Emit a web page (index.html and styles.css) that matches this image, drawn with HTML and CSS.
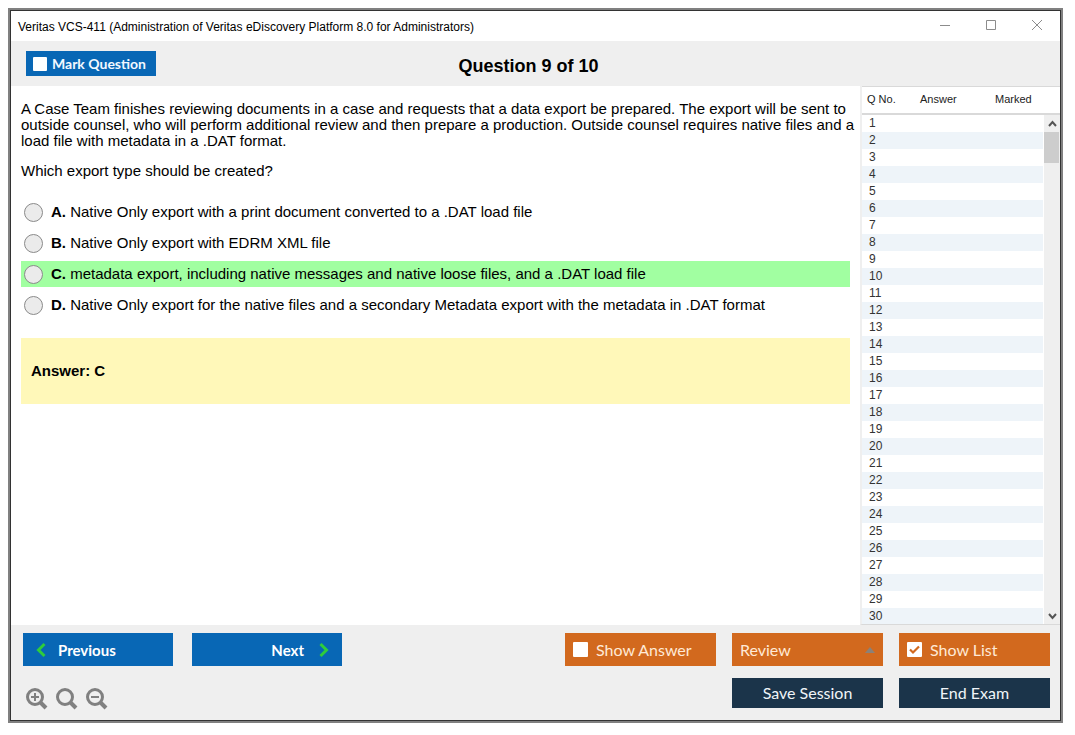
FILE: index.html
```
<!DOCTYPE html>
<html lang="en">
<head>
    <meta charset="UTF-8">
    <title>Veritas VCS-411</title>
    <link rel="stylesheet" href="styles.css">
</head>
<body>
<div class="window">
    <header class="caption">
        <span class="caption-title">Veritas VCS-411 (Administration of Veritas eDiscovery Platform 8.0 for Administrators)</span>
        <div class="caption-buttons">
            <button type="button" aria-label="Minimize"><svg width="12" height="12" viewBox="0 0 12 12"><path d="M1 5.500h10"/></svg></button>
            <button type="button" aria-label="Maximize"><svg width="12" height="12" viewBox="0 0 12 12"><path d="M1.500 0.500h9v9h-9z"/></svg></button>
            <button type="button" aria-label="Close"><svg width="12" height="12" viewBox="0 0 12 12"><path d="M1 0l10 10M11 0L1 10"/></svg></button>
        </div>
    </header>

    <div class="topbar">
        <label class="mark"><input type="checkbox" class="check">Mark Question</label>
        <h1>Question 9 of 10</h1>
    </div>

    <div class="main">
        <main class="question">
            <p>A Case Team finishes reviewing documents in a case and requests that a data export be prepared. The export will be sent to outside counsel, who will perform additional review and then prepare a production. Outside counsel requires native files and a load file with metadata in a .DAT format.</p>
            <p>Which export type should be created?</p>
            <div class="options">
                <label class="option"><input type="radio" name="answer"><span><b>A.</b> Native Only export with a print document converted to a .DAT load file</span></label>
                <label class="option"><input type="radio" name="answer"><span><b>B.</b> Native Only export with EDRM XML file</span></label>
                <label class="option correct"><input type="radio" name="answer"><span><b>C.</b> metadata export, including native messages and native loose files, and a .DAT load file</span></label>
                <label class="option"><input type="radio" name="answer"><span><b>D.</b> Native Only export for the native files and a secondary Metadata export with the metadata in .DAT format</span></label>
            </div>
            <div class="answer">Answer: C</div>
        </main>

        <aside class="list">
            <div class="list-head"><span>Q No.</span><span>Answer</span><span>Marked</span></div>
            <div class="list-body">
                <table aria-label="Questions">
                    <tbody>
                    <tr><td>1</td><td></td><td></td></tr>
                    <tr><td>2</td><td></td><td></td></tr>
                    <tr><td>3</td><td></td><td></td></tr>
                    <tr><td>4</td><td></td><td></td></tr>
                    <tr><td>5</td><td></td><td></td></tr>
                    <tr><td>6</td><td></td><td></td></tr>
                    <tr><td>7</td><td></td><td></td></tr>
                    <tr><td>8</td><td></td><td></td></tr>
                    <tr><td>9</td><td></td><td></td></tr>
                    <tr><td>10</td><td></td><td></td></tr>
                    <tr><td>11</td><td></td><td></td></tr>
                    <tr><td>12</td><td></td><td></td></tr>
                    <tr><td>13</td><td></td><td></td></tr>
                    <tr><td>14</td><td></td><td></td></tr>
                    <tr><td>15</td><td></td><td></td></tr>
                    <tr><td>16</td><td></td><td></td></tr>
                    <tr><td>17</td><td></td><td></td></tr>
                    <tr><td>18</td><td></td><td></td></tr>
                    <tr><td>19</td><td></td><td></td></tr>
                    <tr><td>20</td><td></td><td></td></tr>
                    <tr><td>21</td><td></td><td></td></tr>
                    <tr><td>22</td><td></td><td></td></tr>
                    <tr><td>23</td><td></td><td></td></tr>
                    <tr><td>24</td><td></td><td></td></tr>
                    <tr><td>25</td><td></td><td></td></tr>
                    <tr><td>26</td><td></td><td></td></tr>
                    <tr><td>27</td><td></td><td></td></tr>
                    <tr><td>28</td><td></td><td></td></tr>
                    <tr><td>29</td><td></td><td></td></tr>
                    <tr><td>30</td><td></td><td></td></tr>
                    </tbody>
                </table>
                <div class="scrollbar">
                    <button type="button" aria-label="Scroll up"><svg width="9" height="8" viewBox="0 0 9 8"><path d="M1 6l3.500-4L8 6"/></svg></button>
                    <div class="thumb"></div>
                    <button type="button" aria-label="Scroll down" class="down"><svg width="9" height="8" viewBox="0 0 9 8"><path d="M1 2l3.500 4L8 2"/></svg></button>
                </div>
            </div>
        </aside>
    </div>

    <footer class="footer">
        <div class="side">
            <div class="row nav">
                <button type="button" class="btn blue"><svg width="10" height="16" viewBox="0 0 10 16"><path d="M8.500 2L2.500 8l6 6"/></svg>Previous</button>
                <button type="button" class="btn blue next">Next<svg width="10" height="16" viewBox="0 0 10 16"><path d="M1.500 2l6 6-6 6"/></svg></button>
            </div>
            <div class="zoom">
                <button type="button" aria-label="Zoom in"><svg width="22" height="22" viewBox="0 0 22 22"><circle cx="9" cy="9" r="7.500"/><path class="handle" d="M14.500 14.500l5.500 5.500"/><path class="sign" d="M5 9h8M9 5v8"/></svg></button>
                <button type="button" aria-label="Reset zoom"><svg width="22" height="22" viewBox="0 0 22 22"><circle cx="9" cy="9" r="7.500"/><path class="handle" d="M14.500 14.500l5.500 5.500"/></svg></button>
                <button type="button" aria-label="Zoom out"><svg width="22" height="22" viewBox="0 0 22 22"><circle cx="9" cy="9" r="7.500"/><path class="handle" d="M14.500 14.500l5.500 5.500"/><path class="sign" d="M5 9h8"/></svg></button>
            </div>
        </div>
        <div class="side right">
            <div class="row">
                <label class="btn orange"><input type="checkbox" class="check">Show Answer</label>
                <button type="button" class="btn orange review" aria-haspopup="menu">Review<svg width="10" height="6" viewBox="0 0 10 6"><path d="M0 6l5-6 5 6z"/></svg></button>
                <label class="btn orange"><input type="checkbox" class="check" checked>Show List</label>
            </div>
            <div class="row">
                <button type="button" class="btn navy">Save Session</button>
                <button type="button" class="btn navy">End Exam</button>
            </div>
        </div>
    </footer>
</div>
</body>
</html>
```
FILE: styles.css
```
* {
    box-sizing: border-box;
}

body {
    display: flex;
    min-height: 100vh;
    margin: 0;
    padding: 8px 12px 12px 8px;
    background: #fff;
    color: #000;
    font-family: "Liberation Sans", Arial, sans-serif;
    font-size: 15px;
    line-height: 16px;
}

button {
    margin: 0;
    padding: 0;
    border: 0;
    background: none;
    color: inherit;
    font: inherit;
    cursor: pointer;
}

svg {
    display: block;
    flex: none;
    fill: none;
}

.window {
    display: flex;
    flex-direction: column;
    flex: 1;
    min-width: 0;
    padding: 1px;
    border: 2px solid #808080;
    background: #333;
}

/* title bar */
.caption {
    display: flex;
    justify-content: space-between;
    height: 30px;
    padding-left: 7px;
    background: #fff;
    font-size: 12px;
    line-height: 32px;
}

.caption-buttons {
    display: flex;
}

.caption-buttons button {
    display: flex;
    align-items: center;
    justify-content: center;
    width: 46px;
}

.caption-buttons svg {
    stroke: #8c8c8c;
}

.topbar {
    display: grid;
    grid-template-columns: 1fr auto 1fr;
    align-items: center;
    height: 45px;
    padding: 0 29px 0 15px;
    background: #efefef;
}

.topbar h1 {
    margin: 0;
    padding-top: 4px;
    font-size: 18px;
    line-height: 20px;
}

.mark {
    display: flex;
    align-items: center;
    justify-self: start;
    gap: 5px;
    width: 130px;
    height: 25px;
    padding-left: 7px;
    background: #0867b5;
    color: #f2f8ff;
    font-family: Lato, sans-serif;
    font-size: 14px;
    font-weight: bold;
}

.check {
    appearance: none;
    display: block;
    flex: none;
    width: 14px;
    height: 14px;
    margin: 0;
    border-radius: 1px;
    background: #fff;
}

.main {
    display: flex;
    flex: 1;
    background: #fff;
}

.question {
    flex: 1;
    min-width: 0;
    padding: 15px 10px;
}

.question p {
    margin: 0 -8px 14px 0;
}

.options {
    display: flex;
    flex-direction: column;
    gap: 5px;
    margin: 20px 0;
}

.option {
    display: flex;
    align-items: center;
    gap: 8px;
    min-height: 26px;
    padding-left: 3px;
}

.option input {
    appearance: none;
    flex: none;
    width: 19px;
    height: 19px;
    margin: 0;
    border: 1px solid #8a8a8a;
    border-radius: 50%;
    background: #ebebeb;
}

.option input:checked {
    border: 5px solid #0867b5;
}

.correct {
    background: #a1ffa1;
}

.answer {
    padding: 25px 10px;
    background: #fff8b9;
    font-weight: bold;
}

/* question list */
.list {
    display: flex;
    flex-direction: column;
    width: 200px;
    border-left: 2px solid #efefef;
    border-bottom: 1px solid #d9d9d9;
    color: #333;
}

.list-head {
    display: grid;
    grid-template-columns: 53px 75px 1fr;
    height: 29px;
    padding-left: 5px;
    border-top: 1px solid #d9d9d9;
    border-bottom: 2px solid #d9d9d9;
    color: #222;
    font-size: 11px;
    line-height: 25px;
}

.list-body {
    display: flex;
    flex: 1 1 0;
    gap: 1px;
    height: 0;
    min-height: 200px;
    overflow: hidden;
}

.list table {
    flex: 1;
    align-self: flex-start;
    border-collapse: collapse;
    font-size: 12px;
    line-height: 17px;
}

.list td {
    height: 17px;
    padding: 0 0 0 7px;
}

.list tr:nth-child(even) {
    background: #eef4f9;
}

.scrollbar {
    display: flex;
    flex-direction: column;
    width: 16px;
    background: #efefef;
}

.scrollbar button {
    display: flex;
    align-items: center;
    justify-content: center;
    height: 17px;
}

.scrollbar svg {
    stroke: #555;
    stroke-width: 2;
}

.scrollbar .down {
    margin-top: auto;
}

.thumb {
    height: 31px;
    margin-right: 1px;
    background: #cdcdcd;
}

/* bottom buttons */
.footer {
    display: flex;
    justify-content: space-between;
    padding: 8px 10px 10px 12px;
    background: #efefef;
    font-family: Lato, sans-serif;
    font-size: 16px;
}

.side {
    display: flex;
    flex-direction: column;
    gap: 12px;
}

.right {
    align-items: flex-end;
}

.row {
    display: flex;
    gap: 16px;
}

.nav {
    gap: 19px;
}

.btn {
    display: flex;
    align-items: center;
    width: 151px;
    height: 33px;
}

.blue {
    gap: 12px;
    width: 150px;
    padding: 0 13px;
    background: #0867b5;
    color: #fff;
    font-size: 15px;
    font-weight: bold;
}

.blue svg {
    stroke: #2fcc3c;
    stroke-width: 3;
}

.next {
    justify-content: flex-end;
    gap: 15px;
}

.orange {
    gap: 8px;
    padding: 0 8px;
    background: #d2691e;
    color: #ffe9d6;
}

.orange .check {
    width: 15px;
    height: 15px;
}

.check:checked {
    background: #fff url("data:image/svg+xml,%3Csvg xmlns='http://www.w3.org/2000/svg' viewBox='0 0 15 15'%3E%3Cpath d='M3 7.500l3 3L12 4.500' fill='none' stroke='%23d2691e' stroke-width='2.200'/%3E%3C/svg%3E") no-repeat center;
}

.review {
    justify-content: space-between;
}

.review svg {
    fill: #8b8178;
}

.navy {
    justify-content: center;
    height: 30px;
    background: #1b344a;
    color: #f0f4f8;
}

.zoom {
    display: flex;
    gap: 8px;
    padding: 10px 3px 0;
}

.zoom svg {
    stroke: #808080;
    stroke-width: 3;
}

.zoom .sign {
    stroke-width: 2;
}

.zoom .handle {
    stroke-width: 4;
}
```
